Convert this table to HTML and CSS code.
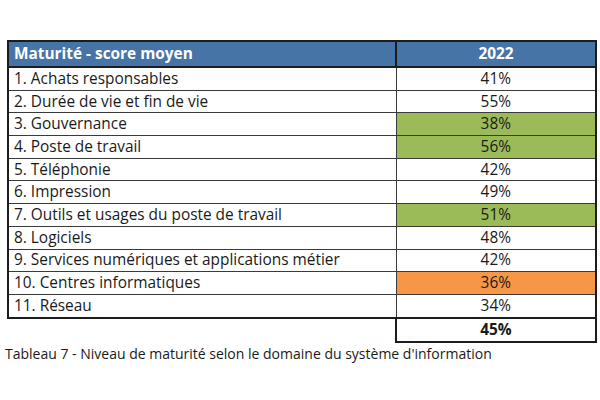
FILE: index.html
```html
<!DOCTYPE html>
<html lang="fr">
<head>
<meta charset="utf-8">
<link rel="stylesheet" href="styles.css">
</head>
<body>
<div class="page">
  <table class="maturity">
    <colgroup>
      <col class="col-label">
      <col class="col-value">
    </colgroup>
    <thead>
      <tr>
        <th class="label">Maturité - score moyen</th>
        <th class="value">2022</th>
      </tr>
    </thead>
    <tbody>
      <tr><td class="label">1. Achats responsables</td><td class="value">41%</td></tr>
      <tr><td class="label">2. Durée de vie et fin de vie</td><td class="value">55%</td></tr>
      <tr><td class="label">3. Gouvernance</td><td class="value good">38%</td></tr>
      <tr><td class="label">4. Poste de travail</td><td class="value good">56%</td></tr>
      <tr><td class="label">5. Téléphonie</td><td class="value">42%</td></tr>
      <tr><td class="label">6. Impression</td><td class="value">49%</td></tr>
      <tr><td class="label">7. Outils et usages du poste de travail</td><td class="value good">51%</td></tr>
      <tr><td class="label">8. Logiciels</td><td class="value">48%</td></tr>
      <tr><td class="label">9. Services numériques et applications métier</td><td class="value">42%</td></tr>
      <tr><td class="label">10. Centres informatiques</td><td class="value warn">36%</td></tr>
      <tr class="last"><td class="label">11. Réseau</td><td class="value">34%</td></tr>
      <tr class="total"><td class="empty"></td><td class="value sum">45%</td></tr>
    </tbody>
  </table>
  <p class="caption">Tableau 7 - Niveau de maturité selon le domaine du système d'information</p>
</div>
</body>
</html>
```

FILE: styles.css
```css
html, body {
  margin: 0;
  padding: 0;
  background: #ffffff;
}

.page {
  padding: 40px 0 0 7px;
  font-family: "Open Sans", "Liberation Sans", sans-serif;
  color: #1a1a1a;
}

.maturity {
  border-collapse: collapse;
  width: 588px;
  font-size: 15.4px;
  table-layout: fixed;
}

.col-label {
  width: 388px;
}

.col-value {
  width: 200px;
}

.maturity th,
.maturity td {
  padding: 0 0 0 5px;
  line-height: 20px;
  height: 21.7px;
  border: 1px solid #3a3a3a;
  white-space: nowrap;
}

.maturity th {
  background: #4674a6;
  color: #ffffff;
  font-weight: 700;
  height: 24px;
  border: 2px solid #1c1c1c;
}

.maturity .label {
  text-align: left;
  border-left: 2px solid #1c1c1c;
}

.maturity .value {
  text-align: center;
  padding: 0;
  border-right: 2px solid #1c1c1c;
}

.maturity .good {
  background: #9bbb59;
}

.maturity .warn {
  background: #f79646;
}

.maturity tr.last td {
  border-bottom: 2px solid #1c1c1c;
}

.maturity tr.total td {
  height: 22px;
}

.maturity td.empty {
  border: none;
  border-top: 2px solid #1c1c1c;
}

.maturity td.sum {
  font-weight: 700;
  border: 2px solid #1c1c1c;
}

.caption {
  margin: 1px 0 0 -2px;
  font-size: 14px;
  color: #1a1a1a;
}
```
